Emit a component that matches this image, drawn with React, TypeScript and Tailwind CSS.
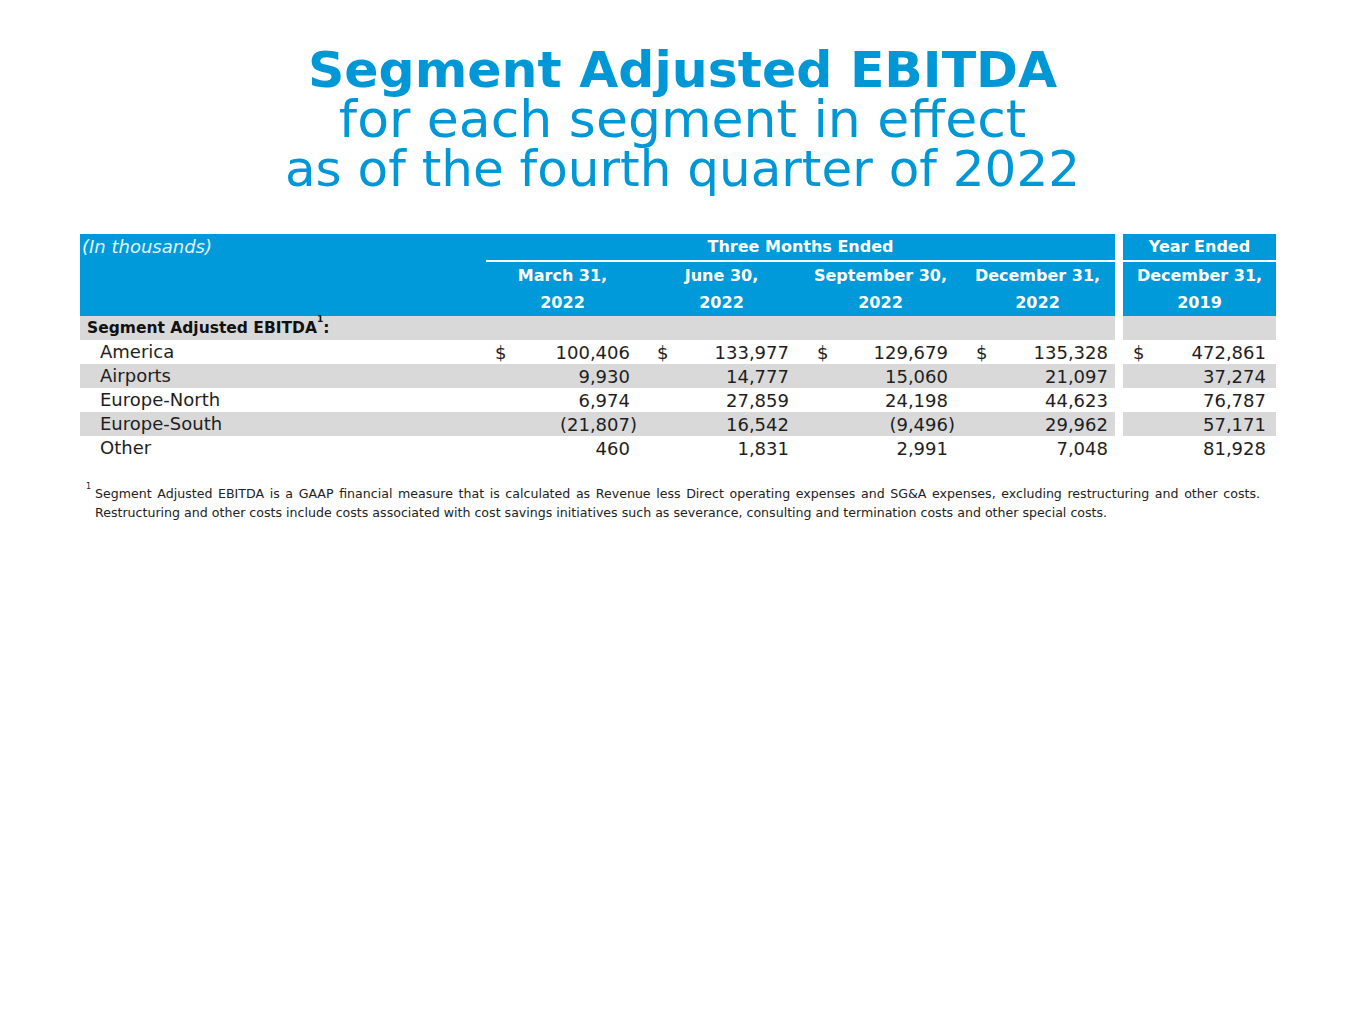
import React from "react";

const font = { fontFamily: '"DejaVu Sans", "Liberation Sans", sans-serif' };

type Row = { label: string; values: string[]; dollar?: boolean; shade?: boolean };

const rows: Row[] = [
  { label: "America", values: ["100,406", "133,977", "129,679", "135,328", "472,861"], dollar: true },
  { label: "Airports", values: ["9,930", "14,777", "15,060", "21,097", "37,274"], shade: true },
  { label: "Europe-North", values: ["6,974", "27,859", "24,198", "44,623", "76,787"] },
  { label: "Europe-South", values: ["(21,807)", "16,542", "(9,496)", "29,962", "57,171"], shade: true },
  { label: "Other", values: ["460", "1,831", "2,991", "7,048", "81,928"] },
];

const heads = [
  ["March 31,", "2022"],
  ["June 30,", "2022"],
  ["September 30,", "2022"],
  ["December 31,", "2022"],
];

// per-column padding, written out in full so tailwind picks them up
const cellPad = [
  "pl-[12px] pr-[5px]",
  "pl-[15px] pr-[5px]",
  "pl-[16px] pr-[5px]",
  "pl-[16px] pr-[0px]",
];

function Num({ v, dollar, pad }: { v: string; dollar?: boolean; pad: string }) {
  const neg = v.startsWith("(");
  return (
    <div className={`flex justify-between items-center h-[24px] ${pad}`}>
      <span>{dollar ? "$" : ""}</span>
      <span>
        {neg ? v.slice(0, -1) : v}
        <span className={neg ? "" : "invisible"}>)</span>
      </span>
    </div>
  );
}

export default function App() {
  return (
    <div className="w-[1365px] h-[1024px] bg-white text-[#1e1e1e]" style={font}>
      <div className="pt-[46px] text-center text-[#0097d7]">
        <div className="text-[50.5px] font-bold leading-[48px] h-[48px]">Segment Adjusted EBITDA</div>
        <div className="text-[52px] leading-[50px] h-[50px]">for each segment in effect</div>
        <div className="text-[50px] leading-[50px] h-[50px]">as of the fourth quarter of 2022</div>
      </div>

      <div className="ml-[80px] mt-[40px] w-[1196px] grid grid-cols-[403px_159px_159px_159px_155px_8px_153px] text-[18px]">
        {/* header row 1 */}
        <div className="bg-[#0099d9] h-[28px] pl-[2px] text-white/90 italic leading-[26px] text-[18px]">(In thousands)</div>
        <div className="col-span-4 bg-[#0099d9] h-[28px]">
          <div className="ml-[3px] h-[28px] border-b-2 border-white text-center text-white font-bold leading-[26px] text-[16px]">
            Three Months Ended
          </div>
        </div>
        <div className="bg-white"></div>
        <div className="bg-[#0099d9] h-[28px] border-b-2 border-white text-center text-white font-bold leading-[26px] text-[16px]">
          Year Ended
        </div>

        {/* header row 2 */}
        <div className="bg-[#0099d9] h-[54px]"></div>
        {heads.map((h, i) => (
          <div key={i} className="bg-[#0099d9] h-[54px] text-center text-white font-bold leading-[27px] text-[16px]">
            <div>{h[0]}</div>
            <div>{h[1]}</div>
          </div>
        ))}
        <div className="bg-white"></div>
        <div className="bg-[#0099d9] h-[54px] text-center text-white font-bold leading-[27px] text-[16px]">
          <div>December 31,</div>
          <div>2019</div>
        </div>

        {/* section label */}
        <div className="col-span-5 bg-[#d9d9d9] h-[24px] pl-[7px] font-bold leading-[24px] text-[15.5px] text-[#111]">
          Segment Adjusted EBITDA<sup className="text-[9px] align-[7px]">1</sup>:
        </div>
        <div className="bg-white"></div>
        <div className="bg-[#d9d9d9] h-[24px]"></div>

        {rows.map((r) => (
          <React.Fragment key={r.label}>
            <div className={`h-[24px] pl-[20px] leading-[24px] ${r.shade ? "bg-[#d9d9d9]" : ""}`}>{r.label}</div>
            {r.values.slice(0, 4).map((v, i) => (
              <div key={i} className={r.shade ? "bg-[#d9d9d9]" : ""}>
                <Num v={v} dollar={r.dollar} pad={cellPad[i]} />
              </div>
            ))}
            <div className="bg-white"></div>
            <div className={r.shade ? "bg-[#d9d9d9]" : ""}>
              <Num v={r.values[4]} dollar={r.dollar} pad="pl-[10px] pr-[3px]" />
            </div>
          </React.Fragment>
        ))}
      </div>

      <div className="ml-[86px] mt-[24px] w-[1174px] flex text-[12.6px] leading-[19px] text-[#222]">
        <sup className="text-[8px] w-[9px] mt-[7px]">1</sup>
        <div className="flex-1">
          <div className="text-justify [text-align-last:justify]">
            Segment Adjusted EBITDA is a GAAP financial measure that is calculated as Revenue less Direct operating expenses and SG&amp;A expenses, excluding restructuring and other costs.
          </div>
          <div>
            Restructuring and other costs include costs associated with cost savings initiatives such as severance, consulting and termination costs and other special costs.
          </div>
        </div>
      </div>
    </div>
  );
}
